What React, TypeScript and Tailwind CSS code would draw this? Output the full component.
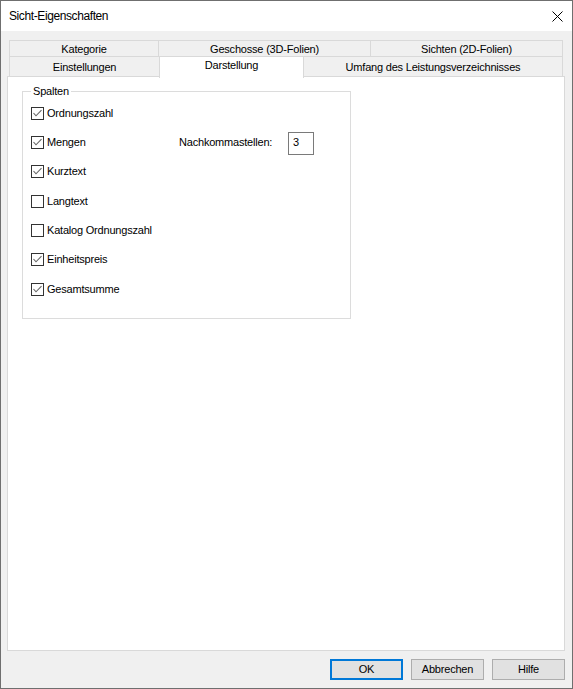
import React from "react";

type Item = { label: string; checked: boolean; gap: string };

const columns: Item[] = [
  { label: "Ordnungszahl", checked: true, gap: "mt-0" },
  { label: "Mengen", checked: true, gap: "mt-[16px]" },
  { label: "Kurztext", checked: true, gap: "mt-[16px]" },
  { label: "Langtext", checked: false, gap: "mt-[17px]" },
  { label: "Katalog Ordnungszahl", checked: false, gap: "mt-[16px]" },
  { label: "Einheitspreis", checked: true, gap: "mt-[16px]" },
  { label: "Gesamtsumme", checked: true, gap: "mt-[17px]" },
];

function CheckBox({ checked }: { checked: boolean }) {
  return (
    <span className="flex h-[13px] w-[13px] shrink-0 items-center justify-center border border-[#333333] bg-white">
      {checked && (
        <svg width="11" height="11" viewBox="0 0 11 11">
          <path d="M1.5 5 L4 7.8 L9.5 2.2" fill="none" stroke="#666666" strokeWidth="1.1" />
        </svg>
      )}
    </span>
  );
}

function Tab({ label, className }: { label: string; className: string }) {
  return (
    <div className={`flex items-center justify-center border border-[#d9d9d9] bg-[#f0f0f0] pt-[1px] ${className}`}>
      {label}
    </div>
  );
}

function Button({ label, primary }: { label: string; primary?: boolean }) {
  return (
    <div
      className={`flex h-[21px] w-[73px] items-center justify-center bg-[#e1e1e1] ${
        primary ? "border-2 border-[#0078d7]" : "border border-[#adadad]"
      }`}
    >
      {label}
    </div>
  );
}

export default function App() {
  return (
    <div className="flex h-[689px] w-[573px] flex-col border border-[#6f6f6f] bg-[#f0f0f0] font-['Liberation_Sans',Arial,sans-serif] text-[11px] leading-[13px] tracking-[-0.2px] text-black">
      {/* title bar */}
      <div className="flex h-[30px] shrink-0 items-center justify-between bg-white pl-[8px] pr-[9px]">
        <span className="pt-[1px] text-[12px] tracking-[-0.4px]">Sicht-Eigenschaften</span>
        <svg width="11" height="11" viewBox="0 0 11 11">
          <path d="M0.5 0.5 L10.5 10.5 M10.5 0.5 L0.5 10.5" stroke="#000" strokeWidth="1" />
        </svg>
      </div>

      {/* body */}
      <div className="flex flex-1 flex-col pl-[6px] pr-[7px] pt-[9px]">
        {/* tab rows */}
        <div className="mx-[2px] flex h-[17px]">
          <Tab label="Kategorie" className="w-[150px]" />
          <Tab label="Geschosse (3D-Folien)" className="-ml-px w-[213px]" />
          <Tab label="Sichten (2D-Folien)" className="-ml-px flex-1" />
        </div>
        <div className="mx-[2px] -mt-px flex h-[21px]">
          <Tab label="Einstellungen" className="w-[151px]" />
          <div className="relative z-10 -ml-px flex h-[22px] w-[145px] items-start justify-center border border-b-0 border-[#d9d9d9] bg-white pt-[2px]">
            Darstellung
          </div>
          <Tab label="Umfang des Leistungsverzeichnisses" className="-ml-px flex-1" />
        </div>

        {/* page */}
        <div className="-mt-px flex flex-1 flex-col border border-[#d9d9d9] bg-white">
          <div className="relative ml-[14px] mt-[14px] h-[228px] w-[329px] border border-[#dcdcdc] pl-[8px] pt-[15px]">
            <span className="absolute left-[8px] top-[-7px] bg-white px-[2px]">Spalten</span>
            {columns.map((c) => (
              <div key={c.label} className={`flex h-[13px] items-center ${c.gap}`}>
                <div className="flex w-[148px] items-center gap-[3px]">
                  <CheckBox checked={c.checked} />
                  <span>{c.label}</span>
                </div>
                {c.label === "Mengen" && (
                  <>
                    <span className="w-[109px]">Nachkommastellen:</span>
                    <div className="relative top-[1px] flex h-[23px] w-[26px] items-start border border-[#7a7a7a] bg-white pl-[4px] pt-[3px]">
                      3
                    </div>
                  </>
                )}
              </div>
            ))}
          </div>
        </div>

        {/* dialog buttons */}
        <div className="flex h-[37px] shrink-0 items-center justify-end gap-[8px]">
          <Button label="OK" primary />
          <Button label="Abbrechen" />
          <Button label="Hilfe" />
        </div>
      </div>
    </div>
  );
}
